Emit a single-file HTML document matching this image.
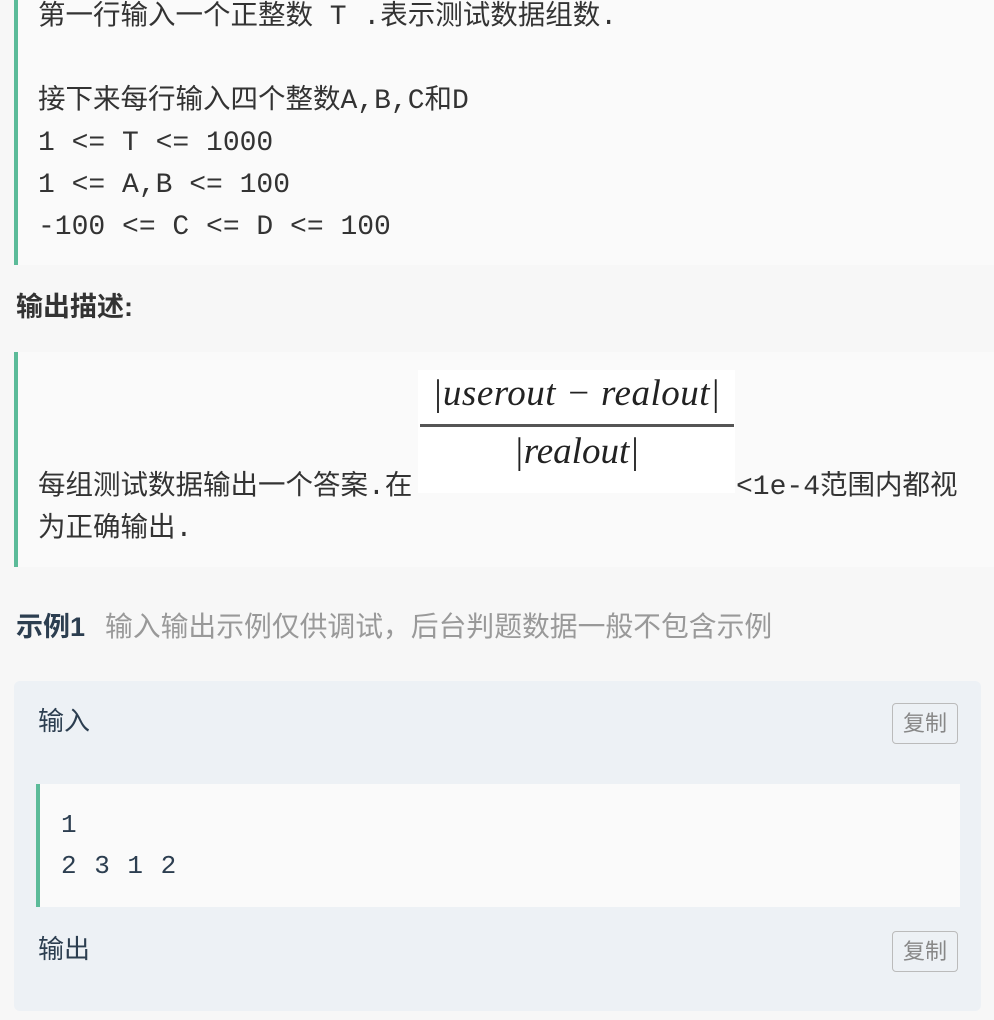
<!DOCTYPE html>
<html><head><meta charset="utf-8"><style>
body{margin:0;width:994px;height:1020px;background:#f7f7f7;position:relative;overflow:hidden;font-family:"Liberation Sans","Noto Sans CJK SC",sans-serif;color:#333}
.a{position:absolute;white-space:nowrap}
.m{font-family:"Noto Sans CJK SC",sans-serif;font-size:27.5px;color:#333}
.m i{font-style:normal;font-family:"Liberation Mono",monospace;font-size:28px}
.bq{position:absolute;left:14px;background:#fafafa;border-left:4px solid #5cbb99}
.btn{position:absolute;left:892px;width:64px;height:39px;border:1.5px solid #bbb;border-radius:4px;font-size:22px;color:#888;text-align:center;line-height:39px}
</style></head><body>
<div class="bq" style="top:-10px;width:976px;height:275px"></div>
<div class="a m" style="left:38px;top:-6px;line-height:36px">第一行输入一个正整数<i> T .</i>表示测试数据组数<i>.</i></div>
<div class="a m" style="left:38px;top:78px;line-height:36px">接下来每行输入四个整数<i>A,B,C</i>和<i>D</i></div>
<div class="a m" style="left:38px;top:120px;line-height:36px"><i>1 &lt;= T &lt;= 1000</i></div>
<div class="a m" style="left:38px;top:162px;line-height:36px"><i>1 &lt;= A,B &lt;= 100</i></div>
<div class="a m" style="left:38px;top:204px;line-height:36px"><i>-100 &lt;= C &lt;= D &lt;= 100</i></div>
<div class="a" style="left:16px;top:290px;font-size:27px;font-weight:bold;line-height:34px">输出描述:</div>
<div class="bq" style="top:352px;width:976px;height:215px"></div>
<div class="a" style="left:418px;top:370px;width:317px;height:123px;background:#fff"></div>
<div class="a" style="left:418px;top:372px;width:317px;text-align:center;font-family:'Liberation Serif',serif;font-style:italic;font-size:37px;letter-spacing:0.5px;color:#222">|userout − realout|</div>
<div class="a" style="left:420px;top:424px;width:314px;height:3px;background:#555"></div>
<div class="a" style="left:418px;top:430px;width:317px;text-align:center;font-family:'Liberation Serif',serif;font-style:italic;font-size:37px;color:#222">|realout|</div>
<div class="a m" style="left:38px;top:464px;line-height:36px">每组测试数据输出一个答案<i>.</i>在</div>
<div class="a m" style="left:736px;top:464px;line-height:36px"><i>&lt;1e-4</i>范围内都视</div>
<div class="a m" style="left:38px;top:506px;line-height:36px">为正确输出<i>.</i></div>
<div class="a" style="left:16px;top:610px;font-size:27px;line-height:34px"><b style="color:#2c3e50">示例1</b><span style="color:#999;margin-left:20px;font-size:27.8px">输入输出示例仅供调试，后台判题数据一般不包含示例</span></div>
<div class="a" style="left:14px;top:681px;width:967px;height:330px;background:#edf1f5;border-radius:6px"></div>
<div class="a" style="left:38px;top:704px;font-size:26px;color:#2c3e50;line-height:34px">输入</div>
<div class="btn" style="top:703px">复制</div>
<div class="a" style="left:36px;top:784px;width:920px;height:123px;background:#fafafa;border-left:4px solid #5cbb99"></div>
<div class="a" style="left:61px;top:808px;font-family:'Liberation Mono',monospace;font-size:26px;color:#2c3e50;line-height:34px">1</div>
<div class="a" style="left:61px;top:849px;font-family:'Liberation Mono',monospace;font-size:26px;letter-spacing:1px;color:#2c3e50;line-height:34px">2 3 1 2</div>
<div class="a" style="left:38px;top:932px;font-size:26px;color:#2c3e50;line-height:34px">输出</div>
<div class="btn" style="top:931px">复制</div>
</body></html>
